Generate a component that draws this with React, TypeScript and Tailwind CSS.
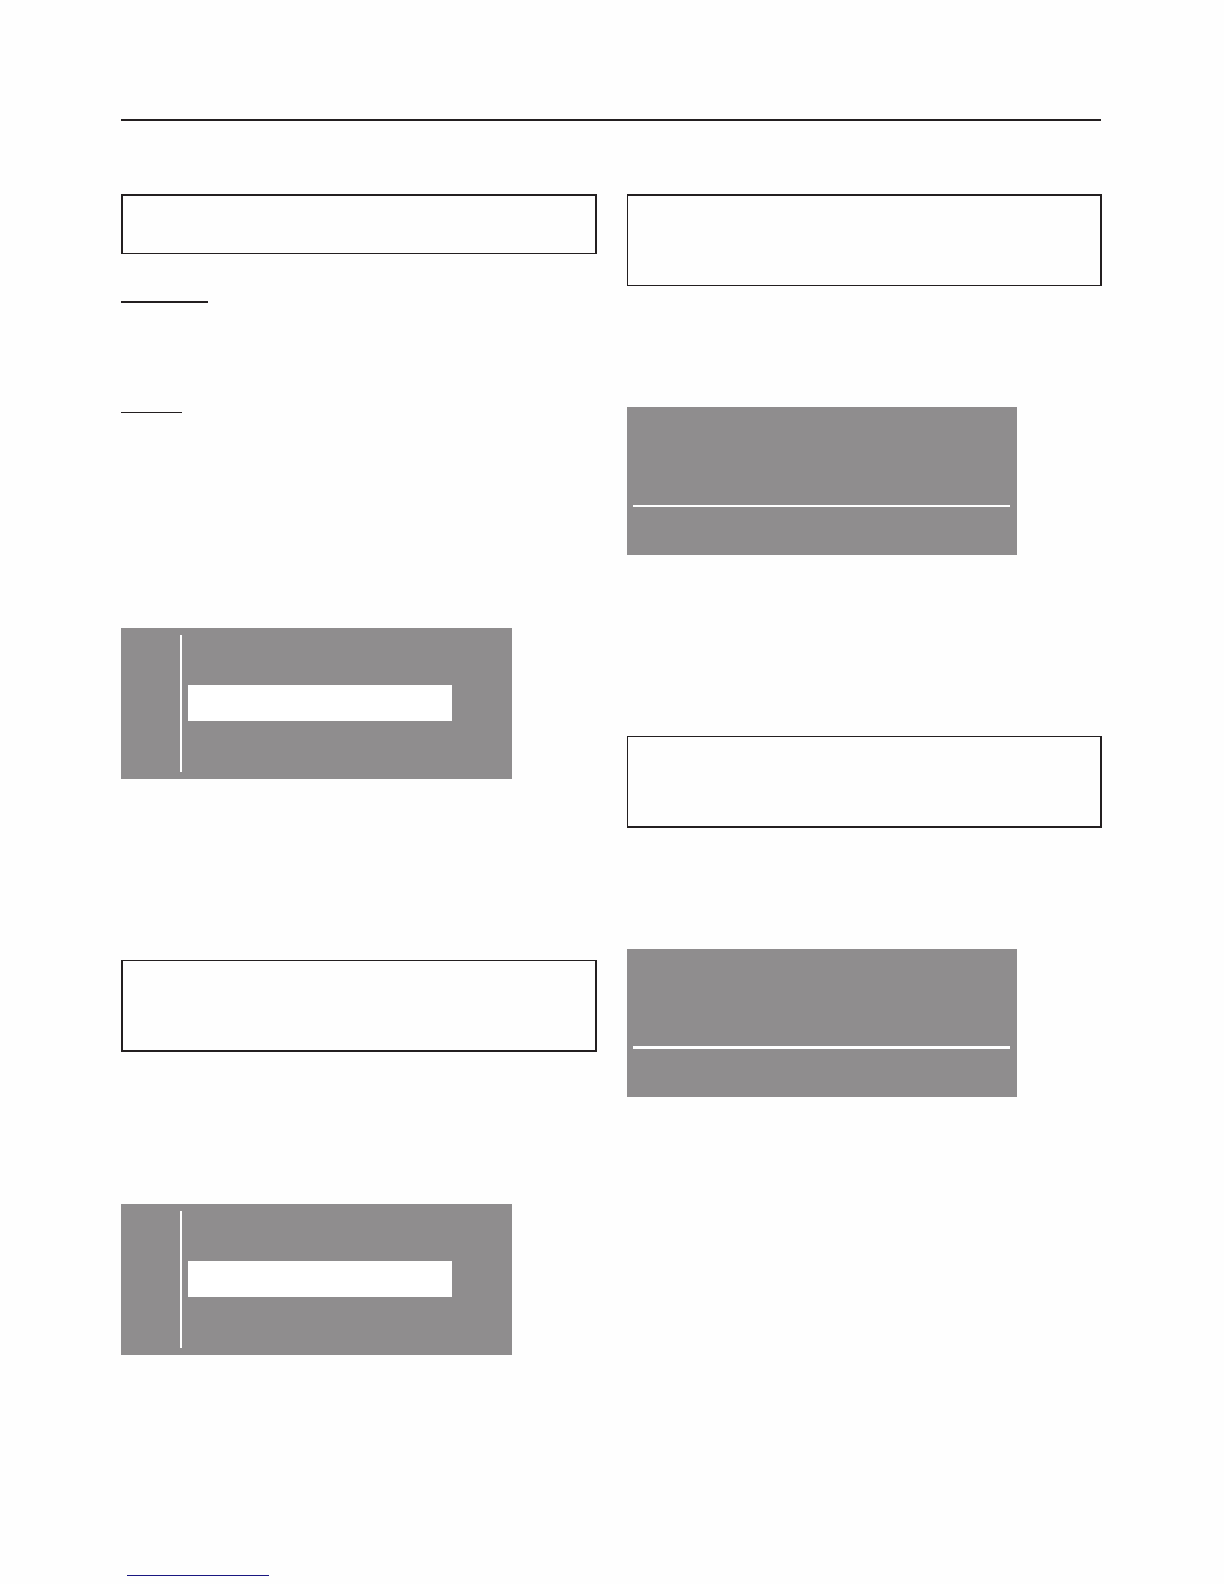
import React from "react";

/* Grey display with a narrow side strip and one highlighted row. */
function MenuDisplay() {
  return (
    <div className="flex w-full max-w-[391px] bg-[#8f8d8e] py-[7px] pl-[59px]">
      <div className="h-[137px] w-[2px] bg-white" />
      <div className="ml-[6px] mt-[50px] h-[36px] w-[264px] bg-white" />
    </div>
  );
}

/* Grey display split by a horizontal rule. */
function SplitDisplay({ rule }: { rule: string }) {
  return (
    <div className="flex h-[148px] w-full max-w-[390px] flex-col justify-end bg-[#8f8d8e] pb-[48px] pl-[6px] pr-[7px]">
      <div className={rule} />
    </div>
  );
}

export default function App() {
  return (
    <div className="min-h-screen bg-[#fefefe] pb-2 pl-[121px] pr-[122px] pt-[119px]">
      <header className="mr-px h-[2px] bg-[#231f20]" />

      <main className="mt-[73px] grid grid-cols-[476fr_475fr] items-start gap-[30px]">
        <section>
          <div className="h-[60px] border-2 border-b border-[#231f20]" />
          <div className="mt-[47px] h-[2px] w-[87px] bg-[#231f20]" />
          <div className="mb-[215px] mt-[109px] h-px w-[61px] bg-[#231f20]" />
          <MenuDisplay />
          <div className="mb-[152px] mt-[181px] h-[92px] border-2 border-t border-[#231f20]" />
          <MenuDisplay />
        </section>

        <section>
          <div className="mb-[121px] h-[92px] border border-r-2 border-t-2 border-[#231f20]" />
          <SplitDisplay rule="h-[2px] bg-white" />
          <div className="mb-[121px] mt-[181px] h-[92px] border border-b-2 border-r-2 border-[#231f20]" />
          <SplitDisplay rule="h-[3px] bg-white" />
        </section>
      </main>

      <footer className="mt-[220px] pl-[6px]">
        <a href="#" aria-label="Link" className="block h-px w-[142px] bg-[#1a1781]" />
      </footer>
    </div>
  );
}
